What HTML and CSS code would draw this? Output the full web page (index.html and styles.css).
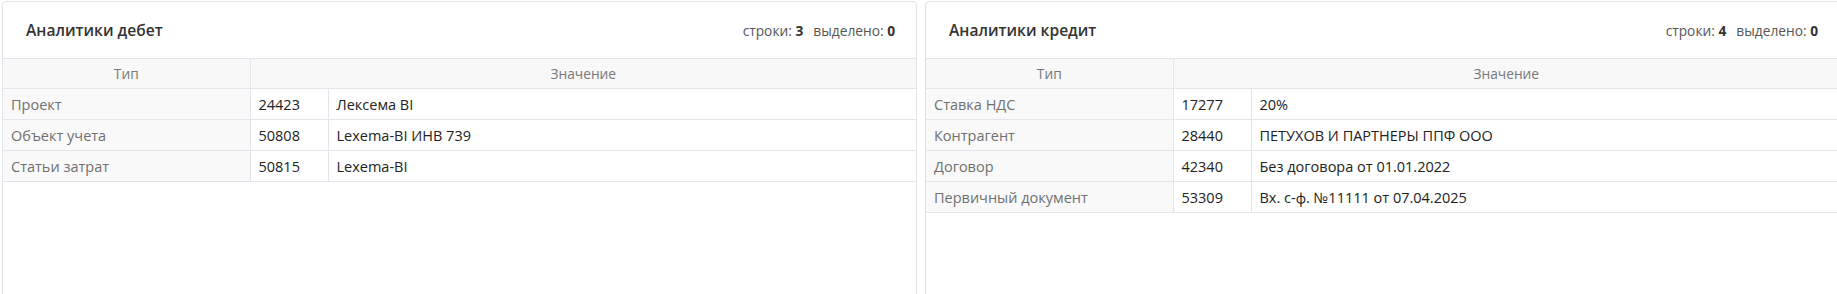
FILE: index.html
```html
<!DOCTYPE html>
<html lang="ru">
<head>
<meta charset="utf-8">
<title>Аналитики</title>
<link rel="stylesheet" href="styles.css">
</head>
<body>
<div class="page">
  <section class="panel">
    <header class="panel-head">
      <h2 class="panel-title">Аналитики дебет</h2>
      <div class="stats">строки: <b>3</b><span class="sep"></span>выделено: <b>0</b></div>
    </header>
    <table class="grid">
      <colgroup><col class="c-type"><col class="c-code"><col class="c-val"></colgroup>
      <thead>
        <tr><th>Тип</th><th colspan="2">Значение</th></tr>
      </thead>
      <tbody>
        <tr><td class="type">Проект</td><td>24423</td><td>Лексема BI</td></tr>
        <tr><td class="type">Объект учета</td><td>50808</td><td>Lexema-BI ИНВ 739</td></tr>
        <tr><td class="type">Статьи затрат</td><td>50815</td><td>Lexema-BI</td></tr>
      </tbody>
    </table>
  </section>
  <section class="panel">
    <header class="panel-head">
      <h2 class="panel-title">Аналитики кредит</h2>
      <div class="stats">строки: <b>4</b><span class="sep"></span>выделено: <b>0</b></div>
    </header>
    <table class="grid">
      <colgroup><col class="c-type"><col class="c-code"><col class="c-val"></colgroup>
      <thead>
        <tr><th>Тип</th><th colspan="2">Значение</th></tr>
      </thead>
      <tbody>
        <tr><td class="type">Ставка НДС</td><td>17277</td><td>20%</td></tr>
        <tr><td class="type">Контрагент</td><td>28440</td><td>ПЕТУХОВ И ПАРТНЕРЫ ППФ ООО</td></tr>
        <tr><td class="type">Договор</td><td>42340</td><td>Без договора от 01.01.2022</td></tr>
        <tr><td class="type">Первичный документ</td><td>53309</td><td>Вх. с-ф. №11111 от 07.04.2025</td></tr>
      </tbody>
    </table>
  </section>
</div>
</body>
</html>
```

FILE: styles.css
```css
html, body {
  margin: 0;
  padding: 0;
  background: #fff;
  overflow: hidden;
}
body {
  font-family: "Open Sans", "Liberation Sans", sans-serif;
  color: #333;
}
.page {
  display: flex;
  gap: 8px;
  padding: 1px 0 0 2px;
  width: 1860px;
}
.panel {
  flex: 0 0 915px;
  height: 310px;
  box-sizing: border-box;
  border: 1px solid #e2e2ea;
  border-radius: 4px;
  background: #fff;
}
.panel-head {
  display: flex;
  align-items: center;
  justify-content: space-between;
  height: 56px;
  padding: 0 21px 0 23px;
}
.panel-title {
  margin: 0;
  font-size: 15.6px;
  font-weight: 600;
  color: #333;
}
.stats {
  font-size: 13.75px;
  color: #555;
}
.stats b {
  font-weight: 700;
  color: #333;
}
.sep {
  display: inline-block;
  width: 10px;
}
.grid {
  width: 100%;
  border-collapse: collapse;
  table-layout: fixed;
  font-size: 14.5px;
}
.c-type { width: 247px; }
.c-code { width: 78px; }
.grid th {
  height: 29px;
  padding: 0;
  background: #f8f8f9;
  font-weight: 400;
  font-size: 13.75px;
  color: #777;
  text-align: center;
  border-top: 1px solid #e4e4ec;
  border-bottom: 1px solid #e4e4ec;
  border-right: 1px solid #e4e4ec;
}
.grid th:last-child { border-right: 0; }
.grid td {
  height: 30px;
  padding: 0 8px;
  color: #222;
  border-bottom: 1px solid #e4e4ec;
  border-right: 1px solid #e4e4ec;
  white-space: nowrap;
}
.grid td:last-child { border-right: 0; }
.grid td.type {
  background: #f9f9f9;
  color: #707070;
}
```
